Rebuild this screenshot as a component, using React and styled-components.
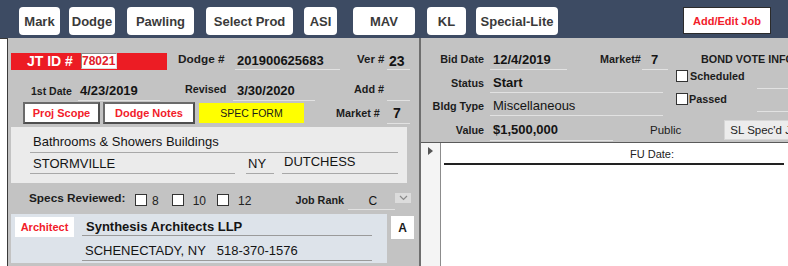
import React from 'react';
import styled, { createGlobalStyle } from 'styled-components';

const GlobalStyle = createGlobalStyle`
  html, body { margin: 0; padding: 0; background: #fff; }
  body { font-family: "Liberation Sans", Arial, sans-serif; }
`;

const navItems = [
  { label: 'Mark', w: 41, ml: 0 },
  { label: 'Dodge', w: 46, ml: 9 },
  { label: 'Pawling', w: 67, ml: 12 },
  { label: 'Select Prod', w: 87, ml: 12 },
  { label: 'ASI', w: 33, ml: 11 },
  { label: 'MAV', w: 62, ml: 16 },
  { label: 'KL', w: 39, ml: 12 },
  { label: 'Special-Lite', w: 82, ml: 10 },
];

const Chevron = () => (
  <svg width="9" height="6" viewBox="0 0 9 6">
    <polyline points="1,1 4.5,4.5 8,1" fill="none" stroke="#8a8a8a" strokeWidth="1.2" />
  </svg>
);

const Arrow = () => (
  <svg width="5" height="8" viewBox="0 0 5 8">
    <polygon points="0,0 5,4 0,8" fill="#555" />
  </svg>
);

const App = () => {
  return (
    <Page>
      <GlobalStyle />
      <TopBar>
        {navItems.map(n => (
          <NavButton key={n.label} $w={n.w} $ml={n.ml}>{n.label}</NavButton>
        ))}
        <AddButton>Add/Edit Job</AddButton>
      </TopBar>

      <Body>
        <Gutter />

        <LeftPanel>
          <Row $h={18} $mt={14}>
            <IdBox>
              <IdLabel>JT ID #</IdLabel>
              <IdInput>78021</IdInput>
            </IdBox>
            <Label $w={46} $ml={11} $fs={11.8} $mb={5}>Dodge #</Label>
            <Field $w={105} $ml={11} $h={18} $bold>201900625683</Field>
            <Label $w={27} $ml={17} $fs={11.5} $mb={5}>Ver #</Label>
            <Field $w={23} $ml={3} $h={18} $bold $fs={14}>23</Field>
          </Row>

          <Row $h={21} $mt={10}>
            <Label $w={39} $ml={23} $fs={10.5}>1st Date</Label>
            <Field $w={82} $ml={8} $h={21} $bold>4/23/2019</Field>
            <Label $w={39} $ml={25} $fs={10.8} $mb={3}>Revised</Label>
            <Field $w={82} $ml={9} $h={21} $pl={4} $bold>3/30/2020</Field>
            <Label $w={29} $ml={39} $fs={10.8} $mb={3}>Add #</Label>
            <Field $w={23} $ml={4} $h={21} />
          </Row>

          <Row $h={22} $mt={1}>
            <FormButton $w={77} $ml={15}>Proj Scope</FormButton>
            <FormButton $w={92} $ml={3}>Dodge Notes</FormButton>
            <SpecButton>SPEC FORM</SpecButton>
            <Label $w={42} $ml={32} $fs={10.8}>Market #</Label>
            <Field $w={23} $ml={9} $h={21} $pl={6} $bold $fs={14}>7</Field>
          </Row>

          <AddressBox>
            <Field $w={368} $h={22} $line="#a8a8a8" $mt={4} $pl={3}>Bathrooms &amp; Showers Buildings</Field>
            <Row $h={21}>
              <Field $w={205} $h={21} $line="#a8a8a8" $pl={3}>STORMVILLE</Field>
              <Field $w={28} $ml={11} $h={21} $line="#a8a8a8">NY</Field>
              <Field $w={116} $ml={8} $h={21} $line="#a8a8a8" $pb={3}>DUTCHESS</Field>
            </Row>
          </AddressBox>

          <Row $h={24} $mt={3}>
            <Label $w={97} $ml={21} $fs={11.8}>Specs Reviewed:</Label>
            <CheckBox $ml={9} $mt={4} />
            <Num $ml={5}>8</Num>
            <CheckBox $ml={13} $mt={4} />
            <Num $ml={9}>10</Num>
            <CheckBox $ml={11} $mt={4} />
            <Num $ml={9}>12</Num>
            <Label $w={46} $ml={44} $fs={10.8} $mt={3}>Job Rank</Label>
            <Field $w={47} $ml={7} $h={18} $center $fs={12} $self="flex-end">C</Field>
            <DropButton><Chevron /></DropButton>
          </Row>

          <ContactRow>
            <ContactBox>
              <RoleTag>Architect</RoleTag>
              <ContactFields>
                <Field $w={290} $h={21} $line="#9a9a9a" $pl={4} $pt={3} $bold>Synthesis Architects LLP</Field>
                <Field $w={290} $h={25} $line="#9a9a9a" $pl={3} $pt={4} $fs={13}>
                  SCHENECTADY, NY&nbsp;&nbsp;&nbsp;518-370-1576
                </Field>
              </ContactFields>
            </ContactBox>
            <LetterBox>A</LetterBox>
          </ContactRow>
        </LeftPanel>

        <RightPanel>
          <BidArea>
            <Row $h={20} $mt={12}>
              <Label $w={63} $right $fs={10.8} $mb={3}>Bid Date</Label>
              <Field $w={77} $ml={6} $h={20} $pl={3} $bold>12/4/2019</Field>
              <Label $w={40} $ml={33} $fs={10.8} $mb={3}>Market#</Label>
              <Field $w={26} $ml={2} $h={20} $pl={9} $bold>7</Field>
              <Label $w={100} $ml={33} $fs={10.8} $mb={3}>BOND VOTE INFO</Label>
            </Row>
            <Row $h={20} $mt={3}>
              <Label $w={63} $right $fs={10.8}>Status</Label>
              <Field $w={173} $ml={6} $h={20} $pl={3} $bold>Start</Field>
              <CheckGroup $ml={13}>
                <CheckBox />
                <CheckLabel $ml={2}>Scheduled</CheckLabel>
              </CheckGroup>
              <Field $w={40} $ml={12} $h={18} $self="flex-start" $mt={-2} />
            </Row>
            <Row $h={20} $mt={3}>
              <Label $w={63} $right $fs={10.8}>Bldg Type</Label>
              <Field $w={173} $ml={6} $h={20} $pl={3}>Miscellaneous</Field>
              <CheckGroup $ml={13}>
                <CheckBox />
                <CheckLabel $ml={1}>Passed</CheckLabel>
              </CheckGroup>
              <Field $w={40} $ml={30} $h={18} $self="flex-start" $mt={-2} />
            </Row>
            <Row $h={20} $mt={4}>
              <Label $w={63} $right $fs={10.8}>Value</Label>
              <Field $w={123} $ml={6} $h={21} $pl={3} $bold>$1,500,000</Field>
              <PlainText $ml={37}>Public</PlainText>
              <ComboBox>SL Spec'd Job</ComboBox>
            </Row>
          </BidArea>

          <NotesArea>
            <RecordSelector><Arrow /></RecordSelector>
            <NotesBody>
              <NotesHeader>FU Date:</NotesHeader>
            </NotesBody>
          </NotesArea>
        </RightPanel>
      </Body>
    </Page>
  );
};

export default App;

const Page = styled.div`
  width: 788px;
  height: 266px;
  overflow: hidden;
  display: flex;
  flex-direction: column;
  color: #1a1a1a;
`;

const TopBar = styled.div`
  flex: none;
  height: 38px;
  box-sizing: border-box;
  background: #3d4b63;
  display: flex;
  align-items: flex-start;
  padding-left: 19px;
`;

const NavButton = styled.button`
  flex: none;
  width: ${p => p.$w}px;
  margin-left: ${p => p.$ml}px;
  margin-top: 7px;
  height: 28px;
  padding: 0;
  border: none;
  border-radius: 4px;
  background: #fff;
  color: #3a3a3a;
  font-family: inherit;
  font-size: 13px;
  font-weight: bold;
`;

const AddButton = styled.button`
  flex: none;
  width: 88px;
  height: 27px;
  margin: 7px 17px 0 auto;
  padding: 0;
  background: #fff;
  border: 1px solid #2b2b2b;
  color: #f2202a;
  font-family: inherit;
  font-size: 11px;
  font-weight: bold;
`;

const Body = styled.div`
  flex: 1;
  display: flex;
  min-height: 0;
`;

const Gutter = styled.div`
  flex: none;
  width: 7px;
  background: #fff;
  border-right: 1px solid #3a3a3a;
  border-top: 1px solid #3a3a3a;
`;

const LeftPanel = styled.div`
  flex: none;
  width: 411px;
  background: #c3c3c3;
  border-right: 2px solid #6e6e6e;
  display: flex;
  flex-direction: column;
`;

const Row = styled.div`
  flex: none;
  display: flex;
  align-items: center;
  height: ${p => p.$h}px;
  margin-top: ${p => p.$mt || 0}px;
`;

const Label = styled.span`
  flex: none;
  width: ${p => p.$w}px;
  margin-left: ${p => p.$ml || 0}px;
  margin-bottom: ${p => p.$mb || 0}px;
  margin-top: ${p => p.$mt || 0}px;
  font-size: ${p => p.$fs || 11}px;
  font-weight: bold;
  color: #1c1c1c;
  text-align: ${p => (p.$right ? 'right' : 'left')};
  white-space: nowrap;
`;

const Field = styled.div`
  flex: none;
  box-sizing: border-box;
  width: ${p => p.$w}px;
  height: ${p => p.$h}px;
  margin-left: ${p => p.$ml || 0}px;
  margin-top: ${p => p.$mt || 0}px;
  align-self: ${p => p.$self || 'auto'};
  padding-left: ${p => (p.$pl ?? 2)}px;
  padding-top: ${p => p.$pt || 0}px;
  padding-bottom: ${p => p.$pb || 0}px;
  border-bottom: 1px solid ${p => p.$line || '#e2e2e2'};
  display: flex;
  align-items: center;
  justify-content: ${p => (p.$center ? 'center' : 'flex-start')};
  font-size: ${p => p.$fs || 13}px;
  font-weight: ${p => (p.$bold ? 'bold' : 'normal')};
  color: #141414;
  white-space: nowrap;
  overflow: hidden;
`;

const IdBox = styled.div`
  flex: none;
  width: 156px;
  height: 17px;
  margin-left: 3px;
  background: #ec1c24;
  display: flex;
  align-items: center;
`;

const IdLabel = styled.span`
  flex: none;
  margin-left: 16px;
  width: 46px;
  color: #fff;
  font-size: 14px;
  font-weight: bold;
  white-space: nowrap;
`;

const IdInput = styled.div`
  flex: none;
  margin-left: 8px;
  width: 36px;
  height: 16px;
  box-sizing: border-box;
  background: #fff;
  border: 1px solid #8a8a8a;
  border-right-color: #ddd;
  border-bottom-color: #ddd;
  color: #e0202a;
  font-size: 12px;
  font-weight: bold;
  line-height: 14px;
  padding-left: 0;
  white-space: nowrap;
  overflow: hidden;
`;

const FormButton = styled.div`
  flex: none;
  box-sizing: border-box;
  width: ${p => p.$w}px;
  height: 22px;
  margin-left: ${p => p.$ml}px;
  background: #fff;
  border: 2px solid #4e4e4e;
  border-top-color: #6a6a6a;
  border-left-color: #6a6a6a;
  display: flex;
  align-items: center;
  justify-content: center;
  color: #f2202a;
  font-size: 11px;
  font-weight: bold;
`;

const SpecButton = styled.div`
  flex: none;
  width: 105px;
  height: 20px;
  margin-left: 4px;
  background: #ffff00;
  display: flex;
  align-items: center;
  justify-content: center;
  font-size: 10.5px;
  color: #1a1a1a;
`;

const AddressBox = styled.div`
  flex: none;
  width: 396px;
  height: 56px;
  box-sizing: border-box;
  margin: 3px 0 0 3px;
  padding-left: 19px;
  background: #ebebeb;
  display: flex;
  flex-direction: column;
`;

const CheckBox = styled.span`
  flex: none;
  box-sizing: border-box;
  width: 12px;
  height: 12px;
  margin-left: ${p => p.$ml || 0}px;
  margin-top: ${p => p.$mt || 0}px;
  background: #fff;
  border: 1px solid #333;
`;

const Num = styled.span`
  flex: none;
  margin-left: ${p => p.$ml}px;
  margin-top: 5px;
  font-size: 12px;
  color: #222;
`;

const DropButton = styled.div`
  flex: none;
  width: 16px;
  height: 10px;
  margin-top: -1px;
  background: #dcdcdc;
  display: flex;
  align-items: center;
  justify-content: center;
`;

const ContactRow = styled.div`
  flex: none;
  display: flex;
  align-items: flex-start;
  margin-top: 4px;
`;

const ContactBox = styled.div`
  flex: none;
  width: 376px;
  height: 49px;
  margin-left: 3px;
  background: #dde3ea;
  display: flex;
  align-items: flex-start;
`;

const RoleTag = styled.div`
  flex: none;
  width: 59px;
  height: 20px;
  margin: 3px 0 0 4px;
  background: #fff;
  display: flex;
  align-items: center;
  justify-content: center;
  color: #f2202a;
  font-size: 11px;
  font-weight: bold;
`;

const ContactFields = styled.div`
  flex: none;
  margin-left: 8px;
  padding-top: 1px;
  display: flex;
  flex-direction: column;
`;

const LetterBox = styled.div`
  flex: none;
  width: 23px;
  height: 23px;
  margin: 2px 0 0 4px;
  background: #fff;
  display: flex;
  align-items: center;
  justify-content: center;
  font-size: 12px;
  font-weight: bold;
  color: #1a1a1a;
`;

const RightPanel = styled.div`
  flex: 1;
  min-width: 0;
  display: flex;
  flex-direction: column;
  overflow: hidden;
`;

const BidArea = styled.div`
  flex: none;
  height: 104px;
  background: #c3c3c3;
  border-bottom: 1px solid #5a5a5a;
  display: flex;
  flex-direction: column;
`;

const CheckGroup = styled.div`
  flex: none;
  align-self: flex-start;
  margin-top: -3px;
  margin-left: ${p => p.$ml}px;
  display: flex;
  align-items: center;
`;

const CheckLabel = styled.span`
  margin-left: ${p => p.$ml}px;
  font-size: 10.8px;
  font-weight: bold;
  color: #1c1c1c;
`;

const PlainText = styled.span`
  flex: none;
  margin-left: ${p => p.$ml}px;
  font-size: 11.5px;
  color: #1c1c1c;
`;

const ComboBox = styled.div`
  flex: none;
  width: 80px;
  height: 20px;
  box-sizing: border-box;
  margin-left: 43px;
  padding-left: 5px;
  background: #ececec;
  border: 1px solid #d6d6d6;
  display: flex;
  align-items: center;
  font-size: 11.5px;
  color: #222;
  white-space: nowrap;
`;

const NotesArea = styled.div`
  flex: 1;
  display: flex;
  background: #fff;
`;

const RecordSelector = styled.div`
  flex: none;
  width: 19px;
  background: #f4f4f4;
  border-right: 1px solid #8c8c8c;
  display: flex;
  justify-content: center;
  align-items: flex-start;
  padding-top: 4px;
  box-sizing: content-box;
`;

const NotesBody = styled.div`
  flex: 1;
  padding: 0 4px 0 3px;
`;

const NotesHeader = styled.div`
  height: 22px;
  box-sizing: border-box;
  padding-left: 186px;
  padding-top: 5px;
  border-bottom: 2px solid #222;
  font-size: 11px;
  color: #222;
`;
